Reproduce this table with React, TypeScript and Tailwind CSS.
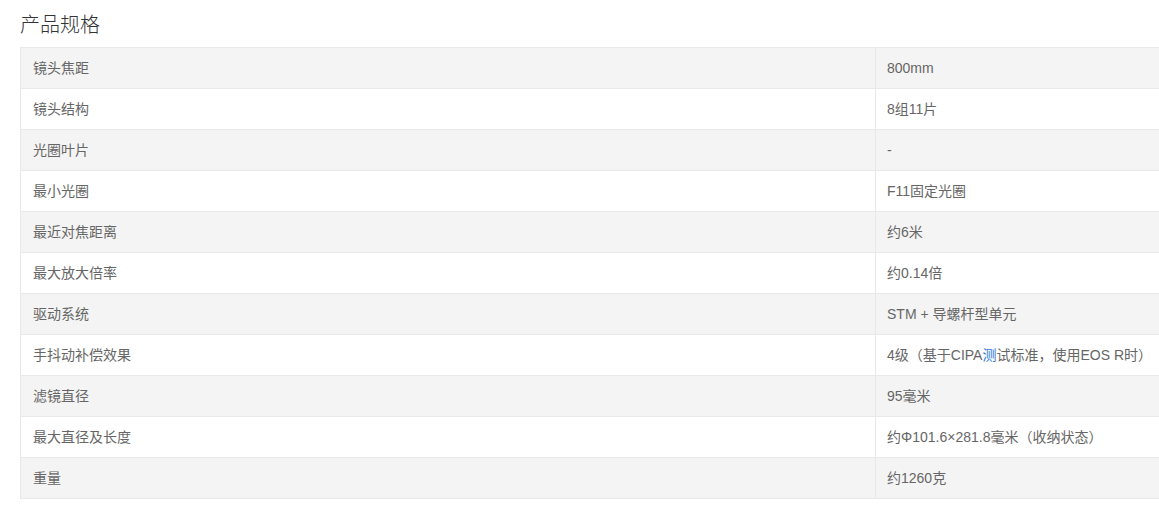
import React from "react";

type Spec = { label: string; value: React.ReactNode };

const specs: Spec[] = [
  { label: "镜头焦距", value: "800mm" },
  { label: "镜头结构", value: "8组11片" },
  { label: "光圈叶片", value: "-" },
  { label: "最小光圈", value: "F11固定光圈" },
  { label: "最近对焦距离", value: "约6米" },
  { label: "最大放大倍率", value: "约0.14倍" },
  { label: "驱动系统", value: "STM + 导螺杆型单元" },
  {
    label: "手抖动补偿效果",
    value: (
      <>
        4级（基于CIPA<span className="text-[#2f78d6]">测</span>试标准，使用EOS R时）
      </>
    ),
  },
  { label: "滤镜直径", value: "95毫米" },
  { label: "最大直径及长度", value: "约Φ101.6×281.8毫米（收纳状态）" },
  { label: "重量", value: "约1260克" },
];

export default function App() {
  return (
    <div
      className="w-[1159px] h-[507px] overflow-hidden bg-white pl-5"
      style={{ fontFamily: '"Liberation Sans", "Noto Sans CJK SC", sans-serif' }}
    >
      <h2 className="pt-[10px] h-[47px] text-[20px] leading-[30px] font-light text-[#333]">产品规格</h2>
      <table className="w-[1160px] border-collapse text-[14px] text-[#666]">
        <tbody>
          {specs.map((s, i) => (
            <tr key={i} className={i % 2 === 0 ? "bg-[#f4f4f4]" : "bg-white"}>
              <td className="w-[855px] h-[41px] border border-[#e8e8e8] px-3 align-middle">
                {s.label}
              </td>
              <td className="h-[41px] border border-[#e8e8e8] px-[11px] align-middle">{s.value}</td>
            </tr>
          ))}
        </tbody>
      </table>
    </div>
  );
}
